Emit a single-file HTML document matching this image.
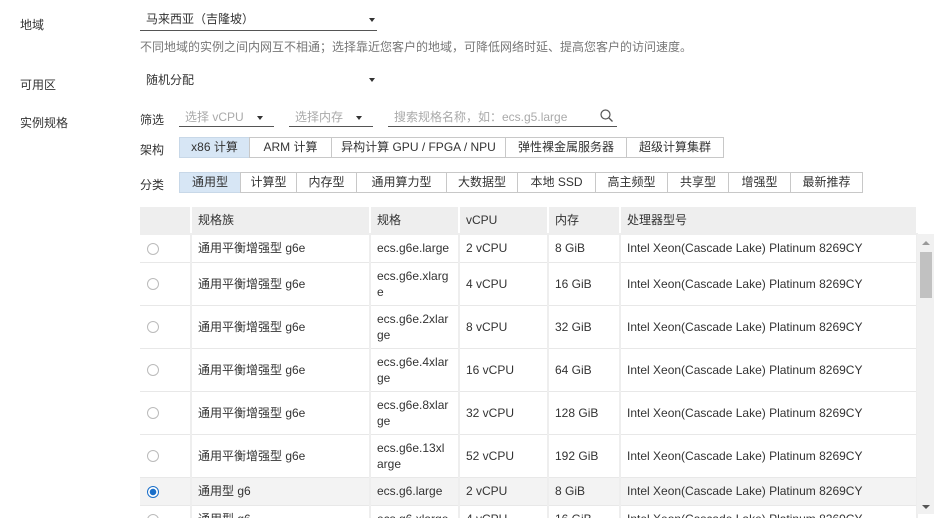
<!DOCTYPE html>
<html><head><meta charset="utf-8"><style>
*{margin:0;padding:0;box-sizing:border-box}
html,body{width:941px;height:523px;overflow:hidden}
body{background:#fff;font-family:"Liberation Sans","Noto Sans CJK SC",sans-serif;font-size:12px;color:#333;position:relative}
.a{position:absolute;white-space:nowrap}
.lbl{left:20px}
.tri{position:absolute;width:0;height:0;border-left:3.5px solid transparent;border-right:3.5px solid transparent;border-top:4px solid #333}
.btns{position:absolute;display:flex;height:21px}
.btns div{flex:none;border:1px solid #c8c8c8;margin-left:-1px;text-align:center;line-height:19px;font-size:12px;color:#333;background:#fff}
.btns div.on{background:#d7e6f5;border-color:#c8d8e8}
table{position:absolute;left:140px;top:207px;border-collapse:collapse;width:777px;table-layout:fixed}
td,th{font-weight:normal;text-align:left;padding:0 6px;border:2px solid #eee;border-top:none;border-left:none;font-size:12px;line-height:16px}
th{background:#eee;height:27px;border-right:2px solid #fff}
td{border-bottom:1px solid #e8e8e8}
tr.s td{background:#f3f3f3}
.r{display:inline-block;width:12px;height:12px;border:1px solid #bbb;border-radius:50%;margin-left:1px;vertical-align:middle}
.r.on{border-color:#1a6fc9;background:radial-gradient(#1a6fc9 0 3px,#fff 3.5px)}
</style></head><body>
<div class="a lbl" style="top:16px">地域</div>
<div class="a" style="left:146px;top:10px">马来西亚（吉隆坡）</div>
<span class="tri" style="left:369px;top:18px"></span>
<div class="a" style="left:140px;top:30px;width:237px;border-top:1px solid #555"></div>
<div class="a" style="left:140px;top:38px;color:#777">不同地域的实例之间内网互不相通；选择靠近您客户的地域，可降低网络时延、提高您客户的访问速度。</div>
<div class="a lbl" style="top:76px">可用区</div>
<div class="a" style="left:146px;top:71px">随机分配</div>
<span class="tri" style="left:369px;top:78px"></span>
<div class="a lbl" style="top:114px">实例规格</div>
<div class="a" style="left:140px;top:111px">筛选</div>
<div class="a" style="left:185px;top:108px;color:#aaa">选择 vCPU</div>
<span class="tri" style="left:257px;top:116px"></span>
<div class="a" style="left:179px;top:126px;width:95px;border-top:1px solid #555"></div>
<div class="a" style="left:295px;top:108px;color:#aaa">选择内存</div>
<span class="tri" style="left:356px;top:116px"></span>
<div class="a" style="left:289px;top:126px;width:84px;border-top:1px solid #555"></div>
<div class="a" style="left:394px;top:108px;color:#aaa">搜索规格名称，如：ecs.g5.large</div>
<svg class="a" style="left:600px;top:109px" width="13" height="13" viewBox="0 0 13 13"><circle cx="5.5" cy="5.5" r="4.5" fill="none" stroke="#555" stroke-width="1.2"/><path d="M9 9l3.5 3.5" stroke="#555" stroke-width="1.3"/></svg>
<div class="a" style="left:388px;top:126px;width:229px;border-top:1px solid #555"></div>
<div class="a" style="left:140px;top:141px">架构</div>
<div class="btns" style="left:180px;top:137px"><div class="on" style="width:71px">x86 计算</div><div style="width:83px">ARM 计算</div><div style="width:175px">异构计算 GPU / FPGA / NPU</div><div style="width:122px">弹性裸金属服务器</div><div style="width:98px">超级计算集群</div></div>
<div class="a" style="left:140px;top:176px">分类</div>
<div class="btns" style="left:180px;top:172px"><div class="on" style="width:62px">通用型</div><div style="width:57px">计算型</div><div style="width:61px">内存型</div><div style="width:91px">通用算力型</div><div style="width:72px">大数据型</div><div style="width:79px">本地 SSD</div><div style="width:73px">高主频型</div><div style="width:62px">共享型</div><div style="width:63px">增强型</div><div style="width:73px">最新推荐</div></div>
<table>
<colgroup><col style="width:51px"><col style="width:179px"><col style="width:89px"><col style="width:89px"><col style="width:72px"><col style="width:297px"></colgroup>
<tr><th></th><th>规格族</th><th>规格</th><th>vCPU</th><th>内存</th><th>处理器型号</th></tr>
<tr style="height:28px"><td><span class="r"></span></td><td>通用平衡增强型 g6e</td><td>ecs.g6e.large</td><td>2 vCPU</td><td>8 GiB</td><td>Intel Xeon(Cascade Lake) Platinum 8269CY</td></tr>
<tr style="height:43px"><td><span class="r"></span></td><td>通用平衡增强型 g6e</td><td>ecs.g6e.xlarg<br>e</td><td>4 vCPU</td><td>16 GiB</td><td>Intel Xeon(Cascade Lake) Platinum 8269CY</td></tr>
<tr style="height:43px"><td><span class="r"></span></td><td>通用平衡增强型 g6e</td><td>ecs.g6e.2xlar<br>ge</td><td>8 vCPU</td><td>32 GiB</td><td>Intel Xeon(Cascade Lake) Platinum 8269CY</td></tr>
<tr style="height:43px"><td><span class="r"></span></td><td>通用平衡增强型 g6e</td><td>ecs.g6e.4xlar<br>ge</td><td>16 vCPU</td><td>64 GiB</td><td>Intel Xeon(Cascade Lake) Platinum 8269CY</td></tr>
<tr style="height:43px"><td><span class="r"></span></td><td>通用平衡增强型 g6e</td><td>ecs.g6e.8xlar<br>ge</td><td>32 vCPU</td><td>128 GiB</td><td>Intel Xeon(Cascade Lake) Platinum 8269CY</td></tr>
<tr style="height:43px"><td><span class="r"></span></td><td>通用平衡增强型 g6e</td><td>ecs.g6e.13xl<br>arge</td><td>52 vCPU</td><td>192 GiB</td><td>Intel Xeon(Cascade Lake) Platinum 8269CY</td></tr>
<tr class="s" style="height:28px"><td><span class="r on"></span></td><td>通用型 g6</td><td>ecs.g6.large</td><td>2 vCPU</td><td>8 GiB</td><td>Intel Xeon(Cascade Lake) Platinum 8269CY</td></tr>
<tr style="height:28px"><td><span class="r"></span></td><td>通用型 g6</td><td>ecs.g6.xlarge</td><td>4 vCPU</td><td>16 GiB</td><td>Intel Xeon(Cascade Lake) Platinum 8269CY</td></tr>
</table>
<div class="a" style="left:0;top:518px;width:941px;height:5px;background:#fff"></div>
<div class="a" style="left:917px;top:234px;width:17px;height:280px;background:#f1f1f1"></div>
<div class="a" style="left:920px;top:252px;width:12px;height:46px;background:#c1c1c1"></div>
<div class="a" style="left:922px;top:241px;border-left:4px solid transparent;border-right:4px solid transparent;border-bottom:4px solid #999"></div>
<div class="a" style="left:922px;top:505px;border-left:4px solid transparent;border-right:4px solid transparent;border-top:4px solid #555"></div>
</body></html>
